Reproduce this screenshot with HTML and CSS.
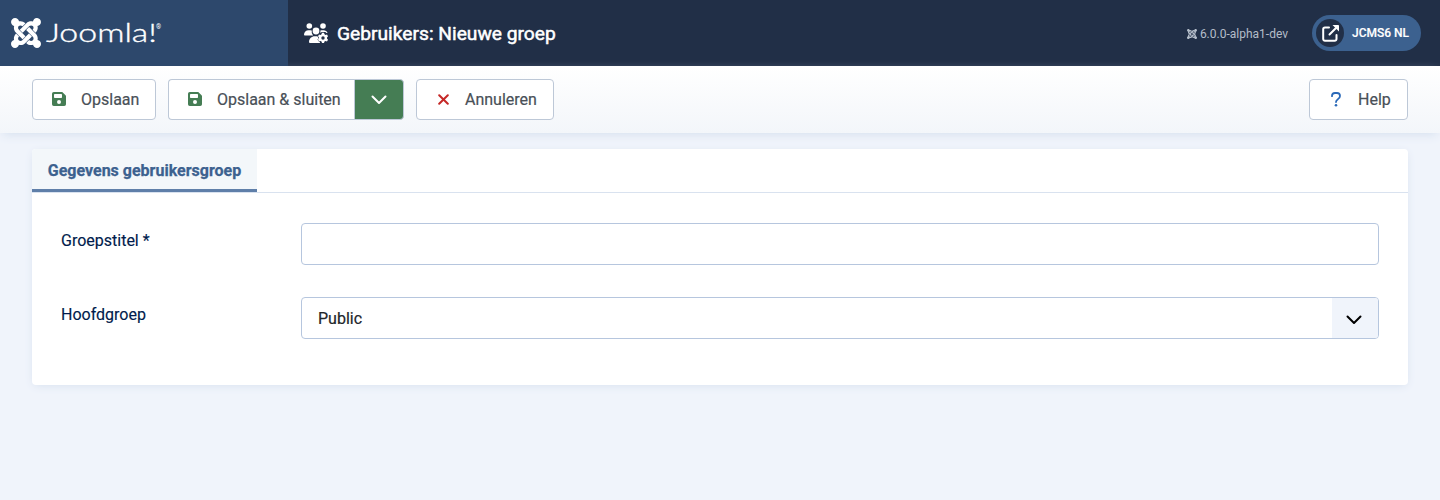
FILE: index.html
```html
<!DOCTYPE html>
<html lang="nl">
<head>
<meta charset="utf-8">
<title>Gebruikers: Nieuwe groep</title>
<link rel="stylesheet" href="styles.css">
</head>
<body>
<svg class="defs" width="0" height="0" aria-hidden="true">
  <symbol id="joomla" viewBox="0 32 448 448"><path d="M.6 92.1C.6 58.8 27.4 32 60.4 32c30 0 54.5 21.9 59.2 50.2 32.6-7.6 67.1.6 96.5 30l-44.3 44.3c-20.5-20.5-42.6-16.3-55.4-3.5-14.3 14.3-14.3 37.9 0 52.2l99.5 99.5-44 44.3c-87.7-87.2-49.7-49.7-99.8-99.7-26.8-26.5-35-64.8-24.8-98.9C20.4 144.6.6 120.7.6 92.1zm129.5 116.4l44.3 44.3c10-10 89.7-89.7 99.7-99.8 14.3-14.3 37.6-14.3 51.9 0 12.8 12.8 17 35-3.5 55.4l44 44.3c31.2-31.2 38.5-67.6 28.9-101.2 29.2-4.1 51.9-29.2 51.9-59.5 0-33.2-26.8-60.1-59.8-60.1-30.3 0-55.4 22.5-59.5 51.6-33.8-9.9-71.7-1.5-98.3 25.1-18.3 19.1-71.1 71.5-99.6 99.9zm266.3 152.2c8.2-32.7-.9-68.5-26.3-93.9-11.8-12.2 5 4.7-99.5-99.7l-44.3 44.3 99.7 99.7c14.3 14.3 14.3 37.6 0 51.9-12.8 12.8-35 17-55.4-3.5l-44 44.3c27.6 30.2 68 38.8 102.7 28 5.5 27.4 29.7 48.1 58.9 48.1 33 0 59.8-26.8 59.8-60.1 0-30.2-22.5-55-51.6-59.1zm-84.3-53.1l-44-44.3c-87 86.4-50.4 50.4-99.7 99.8-14.3 14.3-37.6 14.3-51.9 0-13.1-13.4-16.9-35.3 3.2-55.4l-44-44.3c-30.2 30.2-38 65.2-29.5 98.3-26.7 6-46.2 29.9-46.2 58.2C0 453.2 26.8 480 59.8 480c28.6 0 52.5-19.8 58.6-46.7 32.7 8.2 68.5-.6 94.2-26 32.1-32 12.2-12.4 99.5-99.7z"/></symbol>
  <symbol id="save" viewBox="0 0 448 448"><path fill-rule="evenodd" d="M56 0H310c13 0 25 5 34 14l90 90c9 9 14 21 14 34v254a56 56 0 0 1-56 56H56a56 56 0 0 1-56-56V56A56 56 0 0 1 56 0zm32 64a24 24 0 0 0-24 24v80a24 24 0 0 0 24 24h208a24 24 0 0 0 24-24V88a24 24 0 0 0-24-24zM224 256a64 64 0 1 0 0 128 64 64 0 0 0 0-128z"/></symbol>
  <symbol id="chevron" viewBox="0 0 16 10"><path d="M1.500 1.500 8 8l6.500-6.500" fill="none" stroke="currentColor" stroke-width="2" stroke-linecap="round" stroke-linejoin="round"/></symbol>
</svg>
<header class="header">
  <a class="brand">
    <svg class="brand-mark"><use href="#joomla"/></svg>
    <svg class="brand-word" width="118" height="30"><text class="word" transform="translate(0 24) scale(1.26 1)" textLength="88" lengthAdjust="spacingAndGlyphs">Joomla!</text><text class="reg" x="110" y="11">®</text></svg>
  </a>
  <div class="header-title">
    <svg class="users" viewBox="0 0 24 20">
      <circle cx="5.300" cy="3" r="2.800"/><circle cx="19" cy="3" r="2.800"/><circle cx="12" cy="8" r="3.400"/>
      <path d="M0 11.700C0 9.200 2 7.300 4.500 7.300h1.800q.8 0 1.500.3a5 5 0 0 0 1.300 4.800H.8q-.8 0-.8-.7zM16.400 7.500q.6-.2 1.200-.2h2c1.800 0 3.300 1 4 2.500l-1.100.3-1.200-1.200h-3.500l-1.400 1.200z"/>
      <path d="M5 19c0-3.400 2.600-5.800 5.700-5.800h3l.5 1.300.9 1-.9 1.900 1.600 1.600.2 1H6q-1 0-1-1z"/>
      <path class="gear" fill-rule="evenodd" d="M18 9.800h2l.5 1.500 1 .6 1.500-.4 1 1.700-1 1.200v1.100l1 1.200-1 1.700-1.500-.4-1 .6-.5 1.400h-2l-.5-1.400-1-.6-1.500.4-1-1.700 1-1.200v-1.100l-1-1.200 1-1.700 1.500.4 1-.6zM19 13.300a1.700 1.700 0 1 0 0 3.400 1.700 1.700 0 0 0 0-3.400z"/>
    </svg>
    <h1>Gebruikers: Nieuwe groep</h1>
  </div>
  <div class="header-end">
    <span class="version"><svg><use href="#joomla"/></svg>6.0.0-alpha1-dev</span>
    <a class="site"><span class="site-icon"><svg viewBox="0 0 17 17"><path d="M7 2.500H3A1.800 1.800 0 0 0 1.200 4.300V14A1.800 1.800 0 0 0 3 15.800h9.700a1.800 1.800 0 0 0 1.800-1.800v-4M7.500 9.500 14 3" fill="none" stroke="currentColor" stroke-width="2" stroke-linecap="round"/><path d="M10.500 0h5.700q.8 0 .8.800v5.700z" fill="currentColor"/></svg></span>JCMS6 NL</a>
  </div>
</header>
<nav class="toolbar">
  <button class="btn save"><svg class="disk"><use href="#save"/></svg>Opslaan</button>
  <div class="group">
    <button class="btn save-close"><svg class="disk"><use href="#save"/></svg>Opslaan &amp; sluiten</button>
    <button class="toggle" aria-label="Meer"><svg class="chev"><use href="#chevron"/></svg></button>
  </div>
  <button class="btn cancel"><svg class="cross" viewBox="0 0 11 11"><path d="m1.200 1.200 8.600 8.600m0-8.600-8.600 8.600" stroke="currentColor" stroke-width="2" stroke-linecap="round"/></svg>Annuleren</button>
  <button class="btn help"><svg class="question" viewBox="0 0 10 15"><path d="M1 4.200V4a3 3 0 0 1 3-3h2a3 3 0 0 1 3 3c0 1.500-.8 2.300-2 3.100C5.700 7.900 5 8.300 5 10" fill="none" stroke="currentColor" stroke-width="1.800" stroke-linecap="round"/><circle cx="5" cy="13.300" r="1.300" fill="currentColor"/></svg>Help</button>
</nav>
<main class="card">
  <div class="tabs"><button class="tab">Gegevens gebruikersgroep</button></div>
  <form class="form">
    <label for="title">Groepstitel *</label>
    <input id="title" class="control" type="text">
    <label for="parent">Hoofdgroep</label>
    <div id="parent" class="control select"><span>Public</span><span class="select-end"><svg class="chev"><use href="#chevron"/></svg></span></div>
  </form>
</main>
</body>
</html>
```
FILE: styles.css
```css
* { box-sizing: border-box; }
body { margin: 0; min-height: 500px; background: #f0f4fb; font: 16px/24px Roboto, sans-serif; color: #22262a; }
svg { display: block; fill: currentColor; flex: none; }
.defs { position: absolute; }
button { font: inherit; margin: 0; }
.header { display: flex; height: 66px; background: #212f47; color: #fff; }
.brand { display: flex; width: 288px; align-items: center; padding-left: 11px; background: #2d486c; }
.brand-mark { width: 30px; height: 30px; }
.brand-word { margin-left: 5px; overflow: visible; }
.word { font: 300 25px Lato, sans-serif; stroke: currentColor; stroke-width: .35px; }
.reg { font: 6.500px Roboto, sans-serif; }
.header-title { display: flex; align-items: center; padding-left: 16px; }
.users { width: 24px; height: 20px; }
.gear { stroke: #212f47; stroke-width: .8px; paint-order: stroke; }
h1 { margin: 0 0 0 9px; padding-top: 1px; font-size: 19.200px; font-weight: 400; line-height: 24px; -webkit-text-stroke: .5px; }
.header-end { display: flex; align-items: center; margin-left: auto; padding-right: 19px; }
.version { display: flex; align-items: center; gap: 3px; margin-right: 24px; color: #b4bdc9; font-size: 12px; padding-top: 2px; }
.version svg { width: 10px; height: 10px; }
.site { display: flex; align-items: center; width: 109px; height: 36px; padding-left: 4px; border-radius: 18px; background: #3c618f; font-size: 12px; font-weight: 500; -webkit-text-stroke: .15px; }
.site-icon { display: grid; place-items: center; width: 28px; height: 28px; margin-right: 8px; border-radius: 50%; background: #212f47; }
.site-icon svg { width: 17px; height: 17px; }
.toolbar { display: flex; gap: 12px; height: 67px; padding: 13px 32px; background: linear-gradient(#fff, #f3f6fa); box-shadow: 0 4px 10px -3px #d3deed; }
.btn { display: flex; align-items: center; height: 41px; padding: 1px 0 0 19px; border: 1px solid #bdc8d7; border-radius: 4px; background: #fff; color: #495057; white-space: nowrap; -webkit-text-stroke: .2px; }
.btn svg { margin-top: -2px; }
.disk { width: 14px; height: 14px; margin-right: 15px; color: #457d54; }
.save { width: 124px; }
.group { display: flex; }
.save-close { width: 186px; border-right: 0; border-radius: 4px 0 0 4px; }
.toggle { display: grid; place-items: center; width: 50px; height: 41px; padding: 0; border: 1px solid #bdc8d7; border-radius: 0 4px 4px 0; background: #457d54; color: #fff; }
.chev { width: 16px; height: 10px; }
.cancel { width: 138px; padding-left: 21px; }
.cross { width: 11px; height: 11px; margin-right: 16px; color: #c52827; }
.help { width: 99px; margin-left: auto; padding-left: 21px; }
.question { width: 10px; height: 15px; margin-right: 17px; color: #2a69b8; }
.card { height: 236px; margin: 16px 32px 0; border-radius: 4px; background: #fff; box-shadow: 0 2px 10px -2px #d4deed; }
.tabs { display: flex; height: 44px; border-bottom: 1px solid #d9e2ef; border-radius: 4px 4px 0 0; overflow: hidden; }
.tab { width: 225px; height: 43px; padding: 3px 0 0; border: 0; border-bottom: 3px solid #5f7fa9; background: #f3f7fa; color: #3c618f; font-weight: 700; white-space: nowrap; -webkit-text-stroke: .25px; }
.form { display: grid; grid-template-columns: 240px 1fr; row-gap: 32px; padding: 30px 29px 0; }
label { padding-top: 6px; color: #001b4c; -webkit-text-stroke: .15px; }
.control { width: 100%; height: 42px; border: 1px solid #b6c6de; border-radius: 4px; background: #fff; }
.select { display: flex; align-items: center; justify-content: space-between; padding-left: 16px; overflow: hidden; -webkit-text-stroke: .2px; }
.select > span:first-child { padding-top: 2px; }
.select-end { display: grid; place-items: center; width: 46px; height: 40px; padding: 4px 2px 0 0; background: #f0f4fb; color: #000; }
```
